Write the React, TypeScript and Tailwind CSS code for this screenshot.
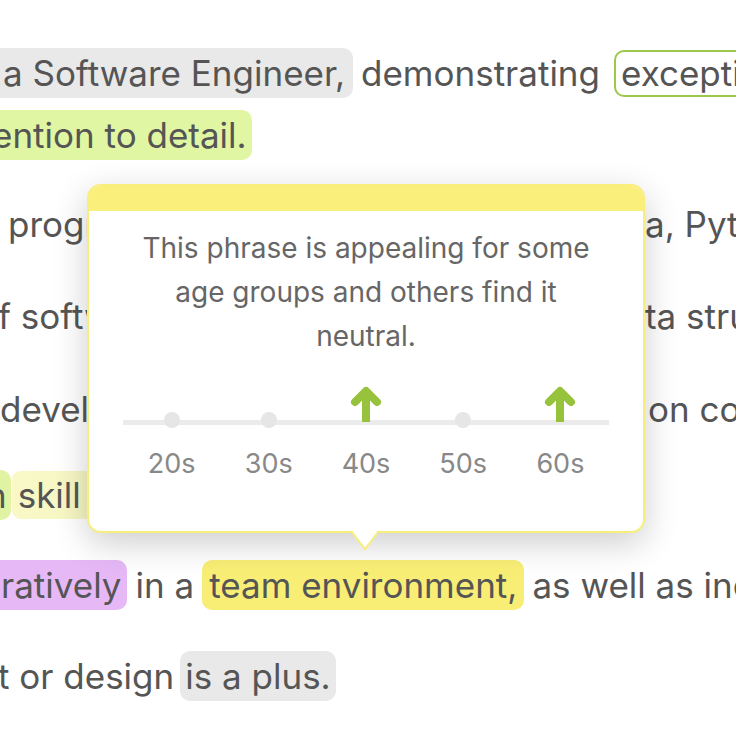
import React from "react";

const ages = [
  { label: "20s", up: false },
  { label: "30s", up: false },
  { label: "40s", up: true },
  { label: "50s", up: false },
  { label: "60s", up: true },
];

function UpArrow() {
  return (
    <svg width="40" height="40" viewBox="0 0 40 40" className="block">
      <path d="M20 40 V10" stroke="#97c23c" strokeWidth="8" fill="none" />
      <path
        d="M9 20 L20 9 L31 20"
        stroke="#97c23c"
        strokeWidth="8"
        fill="none"
        strokeLinecap="round"
        strokeLinejoin="round"
      />
    </svg>
  );
}

function Tooltip() {
  return (
    <div className="absolute left-[87px] top-[184px] w-[558px] h-[349px]">
      <div className="h-full rounded-[14px] border-2 border-[#f8ee7c] bg-white overflow-hidden shadow-[0_10px_34px_rgba(0,0,0,0.2)]">
        <div className="h-[25px] bg-[#fbef7b]" />
        <p className="mx-auto mt-[15px] w-[470px] text-center text-[28px] leading-[44px] text-[#666]">
          This phrase is appealing for some age groups and others find it neutral.
        </p>
        <div className="relative mx-auto mt-[27px] w-[486px]">
          <div className="absolute left-0 right-0 top-[35px] h-[5px] bg-[#ebebeb]" />
          <div className="relative grid grid-cols-5">
            {ages.map((a) => (
              <div key={a.label} className="flex flex-col items-center">
                <div className="flex h-[45px] items-end justify-center">
                  {a.up ? (
                    <div className="mb-[8px]">
                      <UpArrow />
                    </div>
                  ) : (
                    <div className="mb-[2px] h-[16px] w-[16px] rounded-full bg-[#e6e6e6]" />
                  )}
                </div>
                <span className="mt-[14px] text-[27px] leading-[40px] text-[#888]">{a.label}</span>
              </div>
            ))}
          </div>
        </div>
      </div>
      {/* pointer */}
      <svg
        width="32"
        height="24"
        viewBox="0 0 32 24"
        className="absolute left-[262px] top-[345px]"
      >
        <polygon points="2,0 30,0 16,20" fill="white" />
        <polyline points="2,2 16,20 30,2" fill="none" stroke="#f8ee7c" strokeWidth="2" />
      </svg>
    </div>
  );
}

export default function App() {
  const line = "flex h-[50px] items-center whitespace-nowrap";
  const pill = "flex h-[50px] shrink-0 items-center rounded-[10px]";

  return (
    <div className="relative h-[736px] w-[736px] overflow-hidden bg-white font-['Inter',sans-serif] text-[35px] text-[#555]">
      <div className="flex flex-col pt-[48px]">
        <div className={line}>
          <span className={`${pill} -ml-[20px] bg-[#e9e9e9] pl-[23px] pr-[8px]`}>a Software Engineer,</span>
          <span className="ml-[8px] shrink-0">demonstrating</span>
          <span className="ml-[14px] flex h-[47px] shrink-0 items-center rounded-[10px] border-2 border-[#9dc94b] px-[5px]">
            exceptional
          </span>
        </div>

        <div className={`${line} mt-[12px]`}>
          <span className={`${pill} -ml-[20px] bg-[#e1f6a2] pl-[12px] pr-[5px]`}>ention to detail.</span>
        </div>

        <div className={`${line} mt-[39px]`}>
          <span className="w-[645px] shrink-0 overflow-hidden pl-[8px]">programming languages such as Jav</span>
          <span className="shrink-0">a, Python, and</span>
        </div>

        <div className={`${line} mt-[42px]`}>
          <span className="-ml-[2px] w-[647px] shrink-0 overflow-hidden">f software engineering principles and da</span>
          <span className="shrink-0">ta structures</span>
        </div>

        <div className={`${line} mt-[43px]`}>
          <span className="w-[648px] shrink-0 overflow-hidden">developing and testing applicati</span>
          <span className="shrink-0">on complex</span>
        </div>

        <div className={`${line} mt-[36px]`}>
          <span className={`${pill} -ml-[20px] bg-[#dff3a3] pl-[6px] pr-[4px]`}>n</span>
          <span className={`${pill} border border-white bg-gradient-to-r from-[#f9f8c6] to-[#ecf6bd] px-[6px]`}>
            skill in problem solving
          </span>
        </div>

        <div className={`${line} mt-[40px]`}>
          <span className={`${pill} -ml-[20px] bg-[#e6b9f6] pl-[21px] pr-[6px]`}>ratively</span>
          <span className="ml-[8px] shrink-0">in a</span>
          <span className={`${pill} ml-[8px] bg-[#f9ee75] px-[7px]`}>team environment,</span>
          <span className="ml-[8px] shrink-0">as well as independently</span>
        </div>

        <div className={`${line} mt-[41px]`}>
          <span className="-ml-[2px] shrink-0">t or design</span>
          <span className={`${pill} ml-[6px] bg-[#e9e9e9] px-[5px]`}>is a plus.</span>
        </div>
      </div>

      <Tooltip />
    </div>
  );
}
